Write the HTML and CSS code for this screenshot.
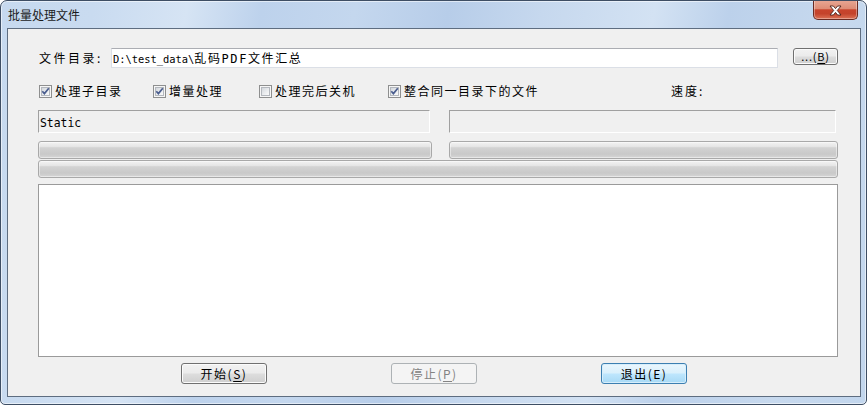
FILE: index.html
```html
<!DOCTYPE html>
<html lang="zh-CN">
<head>
<meta charset="utf-8">
<title>批量处理文件</title>
<link rel="stylesheet" href="styles.css">
</head>
<body>
<div class="window">
  <div class="titlebar">
    <span class="title">批量处理文件</span>
    <div class="close">
      <svg width="13" height="11" viewBox="0 0 13 11"><path d="M1 1 H4.4 L6.5 3.6 L8.6 1 H12 L8.3 5.5 L12 10 H8.6 L6.5 7.4 L4.4 10 H1 L4.7 5.5 Z" fill="#fff" stroke="#4a2018" stroke-width="0.9" stroke-linejoin="round"/></svg>
    </div>
  </div>
  <div class="client">
    <div class="row1">
      <span class="label">文件目录:</span>
      <div class="edit"><span class="mono-s">D:\test_data\</span>乱码<span class="mono-p">PDF</span>文件汇总</div>
      <div class="btn browse">...(<u>B</u>)</div>
    </div>
    <div class="checks">
      <label class="chk w1"><span class="cb"><span class="cbi"><svg width="9" height="9" viewBox="0 0 9 9"><path d="M1.3 4.2 L3.4 6.6 L7.8 1.2" fill="none" stroke="#4b5e8f" stroke-width="1.7"/></svg></span></span><span class="ct">处理子目录</span></label>
      <label class="chk w2"><span class="cb"><span class="cbi"><svg width="9" height="9" viewBox="0 0 9 9"><path d="M1.3 4.2 L3.4 6.6 L7.8 1.2" fill="none" stroke="#4b5e8f" stroke-width="1.7"/></svg></span></span><span class="ct">增量处理</span></label>
      <label class="chk w3"><span class="cb"><span class="cbi"></span></span><span class="ct">处理完后关机</span></label>
      <label class="chk w4"><span class="cb"><span class="cbi"><svg width="9" height="9" viewBox="0 0 9 9"><path d="M1.3 4.2 L3.4 6.6 L7.8 1.2" fill="none" stroke="#4b5e8f" stroke-width="1.7"/></svg></span></span><span class="ct">整合同一目录下的文件</span></label>
      <span class="speed">速度:</span>
    </div>
    <div class="statics">
      <div class="static s1"><span class="mono-t">Static</span></div>
      <div class="static s2"></div>
    </div>
    <div class="bars">
      <div class="bar b1"></div>
      <div class="bar b2"></div>
    </div>
    <div class="bar full"></div>
    <div class="list"></div>
    <div class="buttons">
      <div class="btn act">开始(<u>S</u>)</div>
      <div class="btn dis">停止(<u>P</u>)</div>
      <div class="btn focus">退出(E)</div>
    </div>
  </div>
</div>
</body>
</html>
```
FILE: styles.css
```css
html, body {
  margin: 0;
  padding: 0;
  background: #ffffff;
}
body {
  font-family: "Noto Sans CJK SC", "DejaVu Sans", sans-serif;
  font-size: 12px;
  color: #000;
}
.window {
  width: 867px;
  height: 405px;
  box-sizing: border-box;
  border: 1px solid #3e4e64;
  border-radius: 7px 7px 5px 5px;
  display: flex;
  flex-direction: column;
  overflow: hidden;
  background: linear-gradient(100deg,
    #c6d9ef 0%, #c9dbf0 10%, #d6e4f4 20%, #bdd2ec 28%, #c4d7ee 38%,
    #b7cde9 48%, #c6d8ee 58%, #d3e2f3 70%, #bcd1eb 78%, #c7d9ee 90%, #c2d6ed 100%);
  box-shadow: inset 0 0 0 1px rgba(255,255,255,0.55);
}
.titlebar {
  height: 27px;
  flex: none;
  display: flex;
  align-items: flex-start;
  padding-left: 7px;
}
.title {
  line-height: 27px;
  font-size: 12px;
  color: #1b1b1b;
  letter-spacing: 0;
}
.close {
  margin-left: auto;
  margin-right: 8px;
  margin-top: -1px;
  width: 45px;
  height: 20px;
  box-sizing: border-box;
  border: 1px solid #6a2b22;
  border-top: none;
  border-radius: 0 0 5px 5px;
  background: linear-gradient(#e8a895 0%, #de8d76 45%, #c8442c 52%, #c4432b 72%, #dc7155 100%);
  box-shadow: inset 0 0 0 1px rgba(255,255,255,0.35);
  display: flex;
  align-items: center;
  justify-content: center;
}
.close svg { display: block; margin-top: 1px; }
.client {
  flex: 1;
  margin: 0 5px 7px 6px;
  border: 1px solid #5e6d80;
  background: #f0f0f0;
  padding: 19px 22px 0 30px;
  display: flex;
  flex-direction: column;
}
.row1 {
  display: flex;
  height: 20px;
  align-items: flex-start;
}
.label {
  width: 73px;
  padding-left: 1px;
  box-sizing: border-box;
  line-height: 20px;
  letter-spacing: 2.5px;
}
.edit {
  width: 667px;
  height: 20px;
  box-sizing: border-box;
  background: #fff;
  border: 1px solid #dbdfe6;
  border-top-color: #abadb3;
  padding-left: 1px;
  line-height: 18px;
  letter-spacing: 1.6px;
  white-space: nowrap;
}
.mono-s {
  font-family: "DejaVu Sans Mono", "Liberation Mono", monospace;
  font-size: 10.4px;
  letter-spacing: 0;
}
.mono-p {
  font-family: "DejaVu Sans Mono", "Liberation Mono", monospace;
  font-size: 12px;
  letter-spacing: 1.6px;
}
.mono-t {
  font-family: "DejaVu Sans Mono", "Liberation Mono", monospace;
  font-size: 11.4px;
}
.btn {
  box-sizing: border-box;
  border: 1px solid #707070;
  border-radius: 3px;
  background: linear-gradient(#f2f2f2 0%, #ebebeb 48%, #dddddd 52%, #cfcfcf 100%);
  box-shadow: inset 0 0 0 1px #fbfbfb;
  display: flex;
  align-items: center;
  justify-content: center;
  letter-spacing: 1px;
  color: #000;
}
.btn u { text-underline-offset: 2px; }
.browse {
  width: 45px;
  height: 17px;
  margin-left: 15px;
  line-height: 15px;
  font-size: 11px;
  letter-spacing: 0.8px;
}
.checks {
  margin-top: 13px;
  height: 20px;
  display: flex;
  align-items: center;
  padding-left: 1px;
}
.chk {
  display: flex;
  align-items: center;
}
.w1 { width: 114px; }
.w2 { width: 106px; }
.w3 { width: 129px; }
.w4 { width: 283px; }
.cb {
  width: 13px;
  height: 13px;
  box-sizing: border-box;
  border: 1px solid #8e8f8f;
  background: #f6f6f6;
  padding: 1px;
  display: flex;
  flex: none;
}
.cbi {
  flex: 1;
  border: 1px solid #b4b8be;
  background: linear-gradient(135deg, #d4d8dd 0%, #eceef0 60%, #fafafa 100%);
  display: flex;
  align-items: center;
  justify-content: center;
  overflow: visible;
}
.cbi svg { display: block; flex: none; margin: -1px; }
.ct {
  margin-left: 3px;
  letter-spacing: 1.5px;
  line-height: 20px;
}
.speed {
  letter-spacing: 2px;
  line-height: 20px;
}
.statics {
  margin-top: 9px;
  display: flex;
  height: 23px;
}
.static {
  box-sizing: border-box;
  height: 23px;
  border: 1px solid #ffffff;
  border-top-color: #a0a0a0;
  border-left-color: #a0a0a0;
  padding-left: 1px;
  line-height: 21px;
}
.s1 { width: 392px; }
.s2 { width: 387px; margin-left: 19px; }
.bars {
  margin-top: 8px;
  display: flex;
  height: 18px;
}
.bar {
  box-sizing: border-box;
  height: 18px;
  border: 1px solid #a9a9a9;
  border-radius: 3px;
  background: linear-gradient(#f3f3f3 0%, #e6e6e6 28%, #d3d3d3 36%, #c9c9c9 75%, #d6d6d6 100%);
  box-shadow: inset 0 0 0 1px rgba(255,255,255,0.45);
}
.b1 { width: 394px; }
.b2 { width: 389px; margin-left: 17px; }
.full {
  margin-top: 1px;
  width: 800px;
}
.list {
  margin-top: 6px;
  width: 800px;
  height: 173px;
  box-sizing: border-box;
  border: 1px solid #9a9a9a;
  background: #ffffff;
}
.buttons {
  margin-top: 6px;
  display: flex;
  padding-left: 143px;
  gap: 124px;
}
.buttons .btn {
  width: 86px;
  height: 21px;
  letter-spacing: 1.5px;
}
.dis {
  border-color: #adb2b5;
  background: #f4f4f4;
  box-shadow: none;
  color: #838383;
}
.focus {
  border-color: #3c7fb1;
  background: linear-gradient(#eaf6fd 0%, #d9f0fc 48%, #bee6fd 52%, #a7d9f5 100%);
  box-shadow: inset 0 0 0 1px #d7eefb;
}
```
